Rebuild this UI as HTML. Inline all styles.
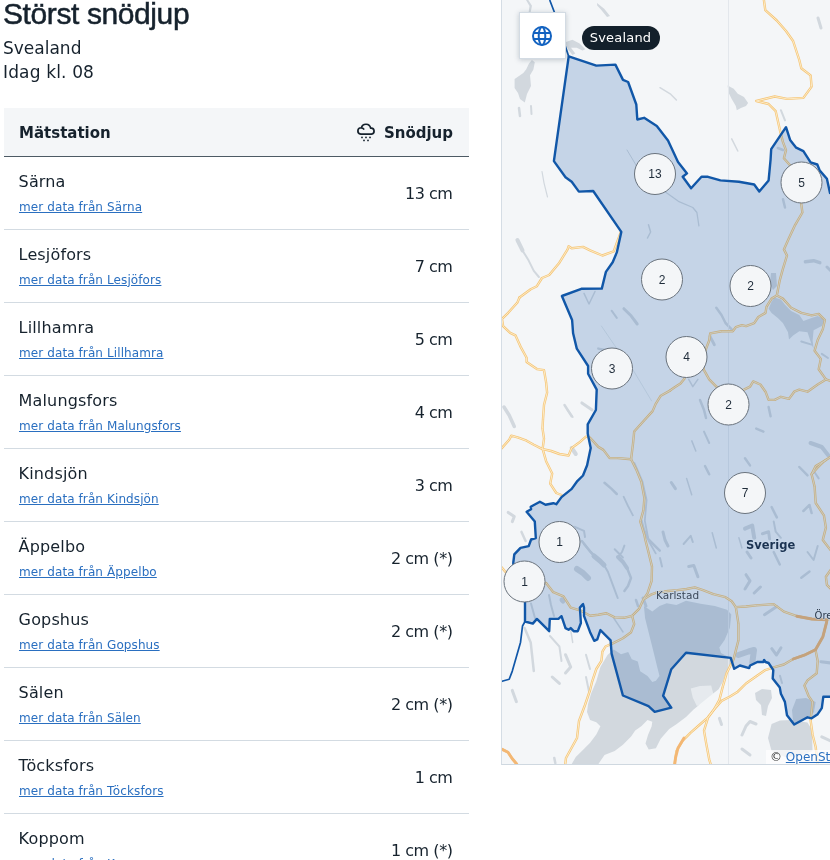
<!DOCTYPE html>
<html lang="sv">
<head>
<meta charset="utf-8">
<title>Störst snödjup</title>
<style>
html,body{margin:0;padding:0;background:#fff;}
body{width:830px;height:860px;overflow:hidden;position:relative;font-family:"DejaVu Sans","Liberation Sans",sans-serif;color:#16222d;}
h1,.sub,table,.attr,.pill,.mapsvg{will-change:transform;}
h1{position:absolute;left:3px;top:-6px;margin:0;font-family:"Liberation Sans","DejaVu Sans",sans-serif;font-weight:400;font-size:30px;line-height:40px;letter-spacing:-0.4px;color:#16222d;-webkit-text-stroke:0.5px #16222d;white-space:nowrap;}
.sub{position:absolute;left:3px;font-size:17px;line-height:24px;white-space:nowrap;}
table{position:absolute;left:4px;top:108px;width:465px;border-collapse:collapse;table-layout:fixed;}
th{height:48px;background:#f4f6f8;border-bottom:1px solid #4d5a64;font-size:15px;font-weight:bold;padding:2px 16px 0 15px;text-align:left;box-sizing:border-box;}
th.r,td.r{text-align:right;}
th.r{padding-right:16px;}
td{height:73px;box-sizing:border-box;border-bottom:1px solid #d3dbe2;padding:0 16px 0 14.6px;vertical-align:top;}
td .n{display:block;font-size:16px;line-height:22px;margin-top:14px;letter-spacing:0.15px;}
td a{display:inline-block;font-size:12px;line-height:16px;color:#2a6fc0;text-decoration:underline;margin-top:6px;margin-left:0.4px;letter-spacing:0.1px;}
td.r{font-size:16px;vertical-align:middle;padding-top:2px;padding-right:16.5px;letter-spacing:-0.45px;}
.ico{position:absolute;left:354px;top:120px;width:24px;height:24px;}
.map{position:absolute;left:501px;top:0;width:329px;height:765px;overflow:hidden;box-sizing:border-box;}
.mapsvg{position:absolute;left:0;top:0;display:block;}
.map:after{content:"";position:absolute;left:0;top:0;right:0;bottom:0;border-left:1px solid #d5dde5;border-bottom:1px solid #cfd8e0;pointer-events:none;}
.gbtn{position:absolute;left:18px;top:12px;width:47px;height:47px;background:#fff;border:1px solid #d3dbe3;box-sizing:border-box;box-shadow:0 1px 5px rgba(40,60,80,0.25);}
.gbtn svg{position:absolute;left:10px;top:11px;}
.pill{position:absolute;left:81px;top:26px;height:24px;width:78px;text-indent:-1px;border-radius:12px;background:#13202b;color:#fff;font-size:13px;line-height:24px;text-align:center;letter-spacing:0.2px;}
.attr{position:absolute;left:265px;top:750px;height:15px;width:70px;background:rgba(255,255,255,0.7);font-size:12px;line-height:15px;padding-left:4px;color:#333;white-space:nowrap;}
.attr a{color:#2a6fc0;text-decoration:underline;}
</style>
</head>
<body>
<h1>Störst snödjup</h1>
<div class="sub" style="top:36px">Svealand</div>
<div class="sub" style="top:60px;letter-spacing:0.15px">Idag kl. 08</div>
<table>
<thead><tr><th>Mätstation</th><th class="r">Snödjup</th></tr></thead>
<tbody>
<tr><td><span class="n">Särna</span><a>mer data från Särna</a></td><td class="r">13 cm</td></tr>
<tr><td><span class="n">Lesjöfors</span><a>mer data från Lesjöfors</a></td><td class="r">7 cm</td></tr>
<tr><td><span class="n">Lillhamra</span><a>mer data från Lillhamra</a></td><td class="r">5 cm</td></tr>
<tr><td><span class="n">Malungsfors</span><a>mer data från Malungsfors</a></td><td class="r">4 cm</td></tr>
<tr><td><span class="n">Kindsjön</span><a>mer data från Kindsjön</a></td><td class="r">3 cm</td></tr>
<tr><td><span class="n">Äppelbo</span><a>mer data från Äppelbo</a></td><td class="r">2 cm (*)</td></tr>
<tr><td><span class="n">Gopshus</span><a>mer data från Gopshus</a></td><td class="r">2 cm (*)</td></tr>
<tr><td><span class="n">Sälen</span><a>mer data från Sälen</a></td><td class="r">2 cm (*)</td></tr>
<tr><td><span class="n">Töcksfors</span><a>mer data från Töcksfors</a></td><td class="r">1 cm</td></tr>
<tr><td><span class="n">Koppom</span><a>mer data från Koppom</a></td><td class="r">1 cm (*)</td></tr>
</tbody>
</table>
<svg class="ico" viewBox="0 0 24 24" fill="none" stroke="#16222d" stroke-width="1.7" stroke-linecap="round" stroke-linejoin="round">
<path d="M6.75 14.15 H17.5 A3 3 0 0 0 16.6 8.2 A4.7 4.7 0 0 0 7.4 7.8 A3.15 3.15 0 0 0 6.75 14.15 Z M7.4 7.8 Q8.9 8 9.7 9"/>
<g fill="#16222d" stroke="none"><circle cx="8" cy="17.4" r="0.9"/><circle cx="12" cy="17.4" r="0.9"/><circle cx="16" cy="17.4" r="0.9"/><circle cx="10" cy="20.4" r="0.9"/><circle cx="14" cy="20.4" r="0.9"/></g>
</svg>
<div class="map">
<svg class="mapsvg" width="329" height="765" viewBox="501 0 329 765">
<rect x="501" y="0" width="329" height="765" fill="#f4f6f8"/>
<g fill="#d2d8de">
<path d="M643.9,606.1 L652.3,611.4 L659.5,606.1 L666.7,603.3 L676.4,604.9 L686,600.8 L700.5,603.7 L714.9,606.1 L727,609.8 L731.3,614.6 L729.9,627.8 L724.6,639.9 L719.3,647.6 L721,653.1 L728.2,656.7 L731.8,660.4 L729.9,666.4 L725.8,673.6 L722.7,682 L718.6,689.3 L712.5,694.1 L700.5,703.7 L693.3,709.8 L686,717 L676.4,724.2 L669.2,729 L660.7,738.7 L655.9,748.3 L648.7,749.5 L645.5,743.5 L648,735.1 L651.6,726.6 L652.3,721.8 L647.5,720.1 L641.3,726.3 L635.2,730.4 L631.1,736.5 L622.9,744.7 L614.7,750.9 L604.5,754.9 L600.4,761.1 L596.3,767 L570,767 L575.8,757 L581.9,750.9 L590.1,742.7 L596.3,734.5 L600.4,726.3 L596.3,722.2 L590.1,720.1 L587,711.9 L588.1,703.7 L591.1,693.5 L596.3,681.2 L600.4,666.9 L607.5,655 L613.7,649.5 L621,654.3 L628.2,651.9 L631.8,659.2 L637.8,661.6 L640.2,671.2 L647.5,676 L652.3,682 L655.9,680.8 L659.5,676 L657.1,666.4 L652.3,647.1 L648.7,632.7 L645.1,618.2 Z"/>
<path d="M771.6,301.6 L774.7,297.5 L780.9,299.6 L785,304.7 L791.1,310.9 L799.3,315 L803.4,321.1 L811.6,318 L817.7,316 L823.9,319 L823.9,322 L821.8,326.1 L813.6,330.2 L812.6,340.5 L813.6,348.7 L811.6,344.6 L807.5,332.3 L799.3,331.3 L793.1,335.4 L789,339.5 L788,332.3 L782.9,323 L777.8,318 L771.6,312.9 L768.6,308.8 Z"/>
<path d="M771,273 L776,273 L777,286 L773,290 L770,284 Z"/>
<path d="M565.9,41.9 L572.4,39.8 L579.6,43.4 L585.4,49.2 L582.5,50.6 L576.7,47.7 L571,47.7 L575.3,53.5 L572.4,54.9 L568.1,49.2 L565.9,44.8 Z"/>
<path d="M531.9,60 L534.8,62.2 L533.4,69.4 L530,75.2 L531,86 L527,94 L524.8,102.4 L520,99 L518,93 L514.6,88.1 L514.6,79 L519,76 L523.3,73 L526.1,69.4 L529,63.6 Z"/>
<path d="M528.3,0 L532,5.8 L530.5,13 L528.5,13 L529.5,6 L526,0 Z"/>
<path d="M727.6,85.6 L733.7,88.7 L737.8,93.8 L744,96.9 L748.1,103 L746,106.1 L740.9,108.1 L736.8,110.2 L735.8,106.1 L731.7,98.9 L728.6,92.8 Z"/>
<path d="M597,2.9 L604.2,8.7 L610,15.9 L607,17 L601.3,10.1 L597.2,5.5 Z"/>
<path d="M755,693 L762,689 L771,690 L772,698 L768,706 L766,716 L762,715 L761,705 L756,700 Z"/>
<path d="M771.6,724 L780,720.5 L791,720 L807.5,722.4 L812,730 L812.5,751 L800,756 L785,757 L771.6,751 L768,738 Z"/>
<path d="M796.2,699 L806,698 L815.7,702 L814,712 L809,718 L800,722 L793,721 L792,710 Z"/>
</g>
<g fill="none" stroke="#d2d8de" stroke-linecap="round" stroke-linejoin="round">
<polyline points="584,544 589,550 594,556" stroke-width="2"/>
<polyline points="594,556 600,561 604,565" stroke-width="5"/>
<polyline points="604,565 608,572 612.6,584.4 617.7,598" stroke-width="2"/>
<polyline points="624.4,545.6 622,552 618,557" stroke-width="2"/>
<polyline points="618,557 623,562 627,568" stroke-width="4"/>
<polyline points="627,568 631,578 628,586 624.4,591" stroke-width="2.5"/>
<polyline points="577,569 583,573 588,578" stroke-width="6"/>
<polyline points="641.3,520.4 644,530 648,538.9 655,546 659.8,550.7" stroke-width="2.5"/>
<polyline points="663,532 665,540 668,546" stroke-width="3"/>
<polyline points="623.6,496.7 628,506 632.9,515.3" stroke-width="1.8"/>
<polyline points="549,595 551,605 554,616" stroke-width="2"/>
<polyline points="562,600 563,601" stroke-width="5"/>
<polyline points="531,603.5 535,618" stroke-width="2"/>
<polyline points="613.7,618 623,632" stroke-width="1.5"/>
<polyline points="643,598 646,606" stroke-width="3"/>
<polyline points="636,600 638,606" stroke-width="2.5"/>
<polyline points="524.6,628 530.7,642.4 533.8,671" stroke-width="2.5"/>
<polyline points="550,636 559.4,646.5 561.5,661" stroke-width="2"/>
<polyline points="565.5,654.7 570.7,667 565.5,673" stroke-width="3"/>
<polyline points="552.2,677 559.4,683.4" stroke-width="3"/>
<polyline points="570.7,630 572.7,642.4" stroke-width="1.5"/>
<polyline points="586,654.7 590,669" stroke-width="2"/>
<polyline points="586,677 589,691.5" stroke-width="2"/>
<polyline points="512.3,690.4 516.4,701.7" stroke-width="3"/>
<polyline points="554.3,758 555.3,763" stroke-width="2.5"/>
<polyline points="542,171.5 544,182.8 547.5,197" stroke-width="1.2"/>
<polyline points="517.4,240 522.5,250.4" stroke-width="4"/>
<polyline points="522.5,250.4 528.7,260.6 533.8,270.9 538.9,277" stroke-width="2"/>
<polyline points="648.5,224.8 650.6,232 647.5,238" stroke-width="1.5"/>
<polyline points="627,150 633,160 640,172" stroke-width="1"/>
<polyline points="584,293.4 589,304 595,291.5" stroke-width="1.5"/>
<polyline points="611.6,310.7 616.8,317.9" stroke-width="2"/>
<polyline points="623.9,308.7 631.1,315.8 637.2,324" stroke-width="3"/>
<polyline points="598.3,348.6 608.6,350.7" stroke-width="2.5"/>
<polyline points="581.9,402.9 592.2,410" stroke-width="3"/>
<polyline points="564.5,405 571.7,416.2" stroke-width="2.5"/>
<polyline points="504,407 509.2,415.2 514.3,426.5" stroke-width="3.5"/>
<polyline points="601.4,326 614.7,345.5 633.1,370 651.6,400.9" stroke-width="0.6"/>
<polyline points="567.6,410 572.7,417" stroke-width="2"/>
<polyline points="571.7,448 575.8,454" stroke-width="4"/>
<polyline points="604.5,482.7 611.6,488.9 616.8,494" stroke-width="2.5"/>
<polyline points="634.5,463 642.5,481.7 646.6,500 644.8,520.6 648.7,541 655.7,553.4" stroke-width="1.8"/>
<polyline points="508.2,512.4 514.3,516.5 512.3,521.6" stroke-width="3"/>
<polyline points="521.5,531.9 525.6,541" stroke-width="2.5"/>
<polyline points="574.8,526.8 584,530.9 585,537" stroke-width="2"/>
<polyline points="581.9,541 590,551.3 596.3,557.5" stroke-width="2.5"/>
<polyline points="614.7,549.3 622.9,557.5" stroke-width="2"/>
<polyline points="660,87.7 670.2,93.8 676.4,100" stroke-width="1.5"/>
<polyline points="731.7,138.9 737.8,151" stroke-width="1.5"/>
<polyline points="780.9,110.2 785,120.4" stroke-width="2"/>
<polyline points="777.8,148 783,150" stroke-width="2.5"/>
<polyline points="783,199.3 785,207.5" stroke-width="2.5"/>
<polyline points="664,191 678.4,201.3 692.8,207.5 696.9,212.5 698.9,225.8" stroke-width="1.3"/>
<polyline points="805.4,261.7 813.6,260.7 819.8,262.7" stroke-width="3.5"/>
<polyline points="716.3,307.8 721.5,315 725.5,323 731.7,329.3" stroke-width="2.5"/>
<polyline points="827,267 831,271" stroke-width="3"/>
<polyline points="710,336.4 714.3,344.6" stroke-width="3"/>
<polyline points="688.7,379.4 692.8,386.6 697.9,379.4" stroke-width="1.5"/>
<polyline points="700,400 704,410 706,418" stroke-width="2.5"/>
<polyline points="704,431.6 709.2,443" stroke-width="2"/>
<polyline points="691.8,440.9 695.8,451" stroke-width="1.5"/>
<polyline points="768.6,407 770.6,416.3" stroke-width="2.5"/>
<polyline points="756.3,428.6 763.4,431.6" stroke-width="2.5"/>
<polyline points="745,458.3 750,465.4" stroke-width="2.5"/>
<polyline points="810.6,443 821.8,447 828,455" stroke-width="4"/>
<polyline points="821.8,353.8 828,358" stroke-width="2"/>
<polyline points="801.3,341.5 811.6,344.6" stroke-width="2"/>
<polyline points="705,466 709.2,474.3" stroke-width="2.5"/>
<polyline points="671.3,482.5 675.4,488.7" stroke-width="3"/>
<polyline points="686.6,478.4 691.7,494.8" stroke-width="1.5"/>
<polyline points="799.3,467 807.5,475.4" stroke-width="2.5"/>
<polyline points="814.6,472.3 818.7,478.4" stroke-width="2"/>
<polyline points="771.6,507 776.8,517.4" stroke-width="2.5"/>
<polyline points="803.4,511 809.5,505 811.6,513" stroke-width="2.5"/>
<polyline points="745,528.6 752.2,525.5 754.2,537.8" stroke-width="4"/>
<polyline points="762.4,533.7 768.6,531.7 769.6,538.9" stroke-width="3"/>
<polyline points="773.7,521.4 775.7,531.7 780.9,537.8" stroke-width="2"/>
<polyline points="738.9,537.8 741.9,548" stroke-width="1.5"/>
<polyline points="747,552 751,558" stroke-width="3"/>
<polyline points="773.7,552 779.8,564.5" stroke-width="2.5"/>
<polyline points="807.5,552 813.6,560 817.7,546" stroke-width="2"/>
<polyline points="801.3,577.8 809.5,571.6" stroke-width="2.5"/>
<polyline points="683.6,544 690.7,535.8 692.8,542" stroke-width="2"/>
<polyline points="712.2,532.7 716.3,548" stroke-width="1.5"/>
<polyline points="688.7,566.5 693.8,565.5 697.9,576.8" stroke-width="3"/>
<polyline points="746,574.7 750,580.9 745,589" stroke-width="3"/>
<polyline points="754.2,593 760.4,587" stroke-width="3"/>
<polyline points="764.5,614.7 776.8,606.5" stroke-width="3"/>
<polyline points="660,558 662,566.5" stroke-width="2"/>
<polyline points="771.8,648.7 776.5,655 781,647.8" stroke-width="3"/>
<polyline points="738.4,655 748.6,651.5 754,650 752.3,662.7" stroke-width="6"/>
<polyline points="780,675.7 782,683" stroke-width="2"/>
<polyline points="821,661.7 831,663" stroke-width="3"/>
<polyline points="742,735 746,726 750,721.5 756,724" stroke-width="3"/>
<polyline points="742,749 750,755" stroke-width="3"/>
<polyline points="719.4,718.3 721.5,724.5" stroke-width="3"/>
<polyline points="821.8,736.8 831,741" stroke-width="3"/>
<polyline points="818,18 821,28" stroke-width="3"/>
<polyline points="519,108 520,116" stroke-width="2.5"/>
<polyline points="531,106 531.5,114" stroke-width="2"/>
</g>
<path d="M690.7,688.6 L700,686 L711.2,685.5 L713.3,693.7 L707.1,701.9 L696.9,706 L692.8,697.8 Z" fill="#f4f6f8" fill-opacity="0.6"/>
<line x1="728.5" y1="0" x2="728.5" y2="765" stroke="#e3e7ec" stroke-width="1"/>
<g fill="none" stroke-linejoin="round" stroke-linecap="round">
<g stroke="#f5c679" stroke-width="2.4">
<polyline points="763.6,-2 765.3,10.2 776.8,20.5 786,31 793.1,41 799.3,60 801.3,68.2 810.6,75.4 811.6,86.6 803.4,97.9 787,98.9 774.7,96.5 756.3,101 768.6,104 775.7,111.2 779.8,129.6 782.9,141.9 786,150.1 783.9,158.3 791.1,166.5 799,178 801.3,204.3 802.4,212.5 795.2,224.8 789,238.1 783.9,249.4 787,255.5 782.9,268.9 779.8,280.1 776.8,295.5"/>
<polyline points="776.8,295.5 782.9,298.6 791.1,307.8 801.3,312.9 811.6,315.4 818.7,313.9 824.9,320.1 822.8,329.3 817.7,340 814.6,350.7 820.8,358.9 818.7,369.2 825.9,379.4"/>
<polyline points="776.8,295.5 771.6,298.6 766.5,306.8 765.5,312.9 758.3,317 754.2,323.1 746,326.2 741.9,325.2 735.8,327.2 732.7,331.3 721.5,331.3 710.2,333.4 709.2,340.5 706.1,348.7 702,360 704,370.2 709.2,379.4 716.3,386.6 728,392 744,389.6 750.1,386.6 753.2,381.4 760.4,384.5 765.5,391.7 768.6,399.9 774.7,399.9 780.9,396.8 789,398.9 794.2,391.7 799.3,389.6 807.5,391.7 817.7,384.5 825.9,379.4 832,381.4"/>
<polyline points="519.5,297.5 530.7,289.3 536.9,286.2 542,278 549.2,275 559.4,262.7 567.6,249.3 568.6,246.3 571.7,248.3 583,246.9 590.1,250.4 602.4,255.5 613.7,251.4 617.8,240.1 620.9,232"/>
<polyline points="519.5,297.5 517.4,302.5 508.2,312.8 502,318.9 503.1,326.1 510.2,332.8 515.4,335.3 520.5,346.6 526.6,357.8 526.6,361.9 536.9,369.1 544,370.1 546.1,382.4 547.1,392.7 544,405 543,419.3 542.5,428.4 544,438.7 542.6,448.9 546.1,461.2 552.2,473.5 550.2,483.7 556.3,493 561.5,495"/>
<polyline points="500,450 502,447.9 509.2,439.7 511.3,435.6 518.4,437.7 526.6,440.7 533.8,444.8 542,448.9 551.2,451 559.4,454 568.6,455.5 571.7,447.9 578.9,442.8 586,436.6 590.1,437.7 598.3,446.9 603.4,449.9 609.6,458.1 617.8,458.1 631.1,459.2"/>
<polyline points="670,390.6 660.8,395.7 655.7,403.9 652.6,411.1 643.4,421.3 634.2,431.5 633.1,442.8 631.1,459.2 636.2,469.4 641.3,481.7 644.4,498.1 643.4,510.4 640.3,521.6 644.4,535 645.4,540 648.5,552.3 652,566.6 651.6,581 647.5,593.3 643.4,599.4"/>
<polyline points="684.6,378.4 680.5,383.5 674.3,387.6 670,390.6"/>
<polyline points="498,563 502,567.7 506.1,572.8 520,580 546.1,583 553.3,592.2 563.5,596.3 570.7,607.6 580.9,610.7 590.1,615.8 598.3,614.8 606.5,613.3 614.7,617.4 623.9,617.8 632.1,615.8 639.3,608.6 643.4,599.4 651.6,594.3 655.7,592.8 668,591 677.4,590.1 686.6,589 694.8,587.4 703,590.1 713.3,594.2 725.5,597.2 731.7,601.3 735.8,607.1 746,606.5 756.3,605.4 773.7,604.1 783.9,611.6 796.9,616.2 811.8,619 826.7,619.9 832,618"/>
<polyline points="632.1,615.8 634.2,624 631.1,632.2 622.9,638.3 612.7,643.4 605.5,646.5 602.4,651.6 601.4,660.9 596.3,669 592.2,681.3 590.1,690 585,705 579,721 577,738 566,758 565,766"/>
<polyline points="735.8,607.1 738.4,623.6 738.4,640.4 736.8,646.6 733.7,658.9 730.7,665.1 726.6,673.3 722.5,687.6 719.4,699.9 714.3,709.1 708.1,717.3 704,730.6 706.1,742.9 709.2,759.3 711.2,766"/>
<polyline points="826.7,621.8 822.9,636.7 815.5,649.7 804.3,655.2 793.2,659 783.9,664.5 773.7,667.3 765.3,670.1 756.3,676.3 746,683.5 737.8,691.7 729.6,696.8 721.5,700.9 714.3,709.1 708.1,717.3 699.9,724.5 690.7,732.7 682.5,740.9 676.4,751.1 674.3,766"/>
<polyline points="815.5,649.7 817.7,661 816.7,673.3 807.5,680.4 804.4,685.5 808.5,695.8 812.6,701.9 810.6,720.4 812.6,734.7 815.7,747 817.7,766"/>
<polyline points="825.9,460 815.7,466.1 811.6,474.3 814.6,486.6 815.7,503 823.9,515.3 825.9,527.6 822.8,539.9 832,552"/>
<polyline points="832,568 825.9,576.8 826.9,584.9 832,590"/>
<polyline points="832,456 823.9,461.3 817.7,467.5 811.6,474.3"/>
<polyline points="499,748 502.2,749.4 508,752.3 512.3,758.8 516.7,764 518,768"/>
</g>
<g stroke="#fdebc6" stroke-width="1">
<polyline points="763.6,-2 765.3,10.2 776.8,20.5 786,31 793.1,41 799.3,60 801.3,68.2 810.6,75.4 811.6,86.6 803.4,97.9 787,98.9 774.7,96.5 756.3,101 768.6,104 775.7,111.2 779.8,129.6 782.9,141.9 786,150.1 783.9,158.3 791.1,166.5 799,178 801.3,204.3 802.4,212.5 795.2,224.8 789,238.1 783.9,249.4 787,255.5 782.9,268.9 779.8,280.1 776.8,295.5"/>
<polyline points="776.8,295.5 782.9,298.6 791.1,307.8 801.3,312.9 811.6,315.4 818.7,313.9 824.9,320.1 822.8,329.3 817.7,340 814.6,350.7 820.8,358.9 818.7,369.2 825.9,379.4"/>
<polyline points="776.8,295.5 771.6,298.6 766.5,306.8 765.5,312.9 758.3,317 754.2,323.1 746,326.2 741.9,325.2 735.8,327.2 732.7,331.3 721.5,331.3 710.2,333.4 709.2,340.5 706.1,348.7 702,360 704,370.2 709.2,379.4 716.3,386.6 728,392 744,389.6 750.1,386.6 753.2,381.4 760.4,384.5 765.5,391.7 768.6,399.9 774.7,399.9 780.9,396.8 789,398.9 794.2,391.7 799.3,389.6 807.5,391.7 817.7,384.5 825.9,379.4 832,381.4"/>
<polyline points="519.5,297.5 530.7,289.3 536.9,286.2 542,278 549.2,275 559.4,262.7 567.6,249.3 568.6,246.3 571.7,248.3 583,246.9 590.1,250.4 602.4,255.5 613.7,251.4 617.8,240.1 620.9,232"/>
<polyline points="519.5,297.5 517.4,302.5 508.2,312.8 502,318.9 503.1,326.1 510.2,332.8 515.4,335.3 520.5,346.6 526.6,357.8 526.6,361.9 536.9,369.1 544,370.1 546.1,382.4 547.1,392.7 544,405 543,419.3 542.5,428.4 544,438.7 542.6,448.9 546.1,461.2 552.2,473.5 550.2,483.7 556.3,493 561.5,495"/>
<polyline points="500,450 502,447.9 509.2,439.7 511.3,435.6 518.4,437.7 526.6,440.7 533.8,444.8 542,448.9 551.2,451 559.4,454 568.6,455.5 571.7,447.9 578.9,442.8 586,436.6 590.1,437.7 598.3,446.9 603.4,449.9 609.6,458.1 617.8,458.1 631.1,459.2"/>
<polyline points="670,390.6 660.8,395.7 655.7,403.9 652.6,411.1 643.4,421.3 634.2,431.5 633.1,442.8 631.1,459.2 636.2,469.4 641.3,481.7 644.4,498.1 643.4,510.4 640.3,521.6 644.4,535 645.4,540 648.5,552.3 652,566.6 651.6,581 647.5,593.3 643.4,599.4"/>
<polyline points="684.6,378.4 680.5,383.5 674.3,387.6 670,390.6"/>
<polyline points="498,563 502,567.7 506.1,572.8 520,580 546.1,583 553.3,592.2 563.5,596.3 570.7,607.6 580.9,610.7 590.1,615.8 598.3,614.8 606.5,613.3 614.7,617.4 623.9,617.8 632.1,615.8 639.3,608.6 643.4,599.4 651.6,594.3 655.7,592.8 668,591 677.4,590.1 686.6,589 694.8,587.4 703,590.1 713.3,594.2 725.5,597.2 731.7,601.3 735.8,607.1 746,606.5 756.3,605.4 773.7,604.1 783.9,611.6 796.9,616.2 811.8,619 826.7,619.9 832,618"/>
<polyline points="632.1,615.8 634.2,624 631.1,632.2 622.9,638.3 612.7,643.4 605.5,646.5 602.4,651.6 601.4,660.9 596.3,669 592.2,681.3 590.1,690 585,705 579,721 577,738 566,758 565,766"/>
<polyline points="735.8,607.1 738.4,623.6 738.4,640.4 736.8,646.6 733.7,658.9 730.7,665.1 726.6,673.3 722.5,687.6 719.4,699.9 714.3,709.1 708.1,717.3 704,730.6 706.1,742.9 709.2,759.3 711.2,766"/>
<polyline points="826.7,621.8 822.9,636.7 815.5,649.7 804.3,655.2 793.2,659 783.9,664.5 773.7,667.3 765.3,670.1 756.3,676.3 746,683.5 737.8,691.7 729.6,696.8 721.5,700.9 714.3,709.1 708.1,717.3 699.9,724.5 690.7,732.7 682.5,740.9 676.4,751.1 674.3,766"/>
<polyline points="815.5,649.7 817.7,661 816.7,673.3 807.5,680.4 804.4,685.5 808.5,695.8 812.6,701.9 810.6,720.4 812.6,734.7 815.7,747 817.7,766"/>
<polyline points="825.9,460 815.7,466.1 811.6,474.3 814.6,486.6 815.7,503 823.9,515.3 825.9,527.6 822.8,539.9 832,552"/>
<polyline points="832,568 825.9,576.8 826.9,584.9 832,590"/>
<polyline points="832,456 823.9,461.3 817.7,467.5 811.6,474.3"/>
<polyline points="499,748 502.2,749.4 508,752.3 512.3,758.8 516.7,764 518,768"/>
</g>
<g stroke="#f3b774" stroke-width="2.9">
<polyline points="796.9,616.2 811.8,619 826.7,619.9 826.7,621.8 822.9,636.7 815.5,649.7 804.3,655.2 793.2,659"/>
<polyline points="499,748 502.2,749.4 508,752.3 512.3,758.8 516.7,764 518,768"/>
<polyline points="684,738 678,748 675.5,758 674.5,766"/>
</g>
</g>
<polygon points="568.7,56.4 596.3,65.6 615.4,64.6 623,79.9 628.1,82 636.3,104.5 637.3,119.5 644.1,117.8 656.8,126 668,140.4 678,162 687,173.4 682.7,176.8 691.1,188.3 701.5,176.8 708,176.8 720.4,180.4 738.9,181.7 754.2,184.5 759.3,191.5 768.6,180.4 770.6,159.3 771.2,149.1 786,127.2 790.1,139.9 796.2,147.7 803.4,151.2 810.6,162.4 817.3,164.5 819.8,170.6 826.9,178.8 830,193 845,193 845,696.8 823.3,696.8 821.8,708.1 817.7,714.2 811.6,718.3 807.5,717.3 794.2,724.5 787,715.2 784.9,701.9 780.9,693.7 779.8,687.6 772.7,678.4 773.3,670.2 768.6,663 765.5,662 764.1,659.9 763.4,662 757.3,662 750.1,665.5 749.1,668.1 739.9,665.5 734.2,668.8 730.7,657.9 686,652.8 671.3,669.2 663.1,695.8 671.3,707.7 654.7,711.9 648.5,706.2 622.9,695.5 611.6,653.6 610.6,640.3 600.4,630.1 597.3,639.3 594.2,640.8 590.1,632.2 584,615.8 584,607.6 583,604.1 579.9,607.6 580.9,623 577.8,631.2 573.7,631.2 570.7,628.1 568.6,629.7 565.5,628.1 561.5,616.2 558.4,618.9 549.8,618.9 549.2,631.2 536.9,618.9 532.8,623.6 525,621.5 525,601.5 524,590 513.3,575 513.3,562.5 514.3,554.3 520.5,547.8 528.7,546.1 531.1,539.5 535.8,538 534.8,521.6 526.6,511.8 531.1,509.3 530.7,506.7 539.9,501.8 545.5,504.8 553.3,503.2 556.3,504.2 561.5,497.1 571.7,488.9 576.8,481.7 583,475.5 587.1,465.3 590.7,447.9 587.7,433.6 587.7,424.3 595.9,410 596.7,389.6 588.1,373.8 588.1,366 576.8,348.6 573.1,333.3 572.1,320 561.9,296 581.3,288.8 601.8,288.6 605.9,271.9 612.7,262.2 616.8,252.4 621.3,231.9 593.2,191 578.9,191.6 571.7,181.7 565.5,177.2 553.9,161.1" fill="#0a4ea3" fill-opacity="0.2" stroke="#1157a8" stroke-width="2.4" stroke-linejoin="round"/>
<polyline points="549.7,0 554.3,12 568.7,56.4" fill="none" stroke="#1157a8" stroke-width="1.7" stroke-linejoin="round"/>
<polyline points="525,621.5 522.5,626 520.5,642.4 516.4,656.8 512.3,671.1 509.2,679.3 502,681.3 498,682" fill="none" stroke="#1157a8" stroke-width="1.7" stroke-linejoin="round"/>
<g font-family="'DejaVu Sans','Liberation Sans',sans-serif">
<text x="746" y="548.5" font-size="11.5" font-weight="bold" fill="#1b3352" stroke="#c9d8ea" stroke-width="1.5" paint-order="stroke">Sverige</text>
<text x="656" y="598.8" font-size="10.5" fill="#3a4758" stroke="#c9d8ea" stroke-width="1.2" paint-order="stroke">Karlstad</text>
<text x="814.6" y="618.6" font-size="10" fill="#2c3a4c" stroke="#c9d8ea" stroke-width="1.2" paint-order="stroke">Örebro</text>
</g>
<g font-family="'Liberation Sans','DejaVu Sans',sans-serif" font-size="12" text-anchor="middle" fill="#1f2c3a">
<circle cx="655" cy="174" r="20.5" fill="#f4f6f8" stroke="#6a737d" stroke-width="1"/>
<text x="655" y="178.3">13</text>
<circle cx="801.5" cy="182.5" r="20.5" fill="#f4f6f8" stroke="#6a737d" stroke-width="1"/>
<text x="801.5" y="186.8">5</text>
<circle cx="662" cy="279.5" r="20.5" fill="#f4f6f8" stroke="#6a737d" stroke-width="1"/>
<text x="662" y="283.8">2</text>
<circle cx="750.5" cy="286" r="20.5" fill="#f4f6f8" stroke="#6a737d" stroke-width="1"/>
<text x="750.5" y="290.3">2</text>
<circle cx="612" cy="368.5" r="20.5" fill="#f4f6f8" stroke="#6a737d" stroke-width="1"/>
<text x="612" y="372.8">3</text>
<circle cx="686.5" cy="357" r="20.5" fill="#f4f6f8" stroke="#6a737d" stroke-width="1"/>
<text x="686.5" y="361.3">4</text>
<circle cx="728.5" cy="404.5" r="20.5" fill="#f4f6f8" stroke="#6a737d" stroke-width="1"/>
<text x="728.5" y="408.8">2</text>
<circle cx="745" cy="493" r="20.5" fill="#f4f6f8" stroke="#6a737d" stroke-width="1"/>
<text x="745" y="497.3">7</text>
<circle cx="559.5" cy="542" r="20.5" fill="#f4f6f8" stroke="#6a737d" stroke-width="1"/>
<text x="559.5" y="546.3">1</text>
<circle cx="524.5" cy="581.5" r="20.5" fill="#f4f6f8" stroke="#6a737d" stroke-width="1"/>
<text x="524.5" y="585.8">1</text>
</g>
</svg>
<div class="gbtn"><svg width="24" height="24" viewBox="0 0 24 24" fill="none" stroke="#1262c0" stroke-width="2"><circle cx="12" cy="12" r="9"/><ellipse cx="12" cy="12" rx="3.3" ry="9"/><path d="M3.6 9H20.4M3.6 15H20.4"/></svg></div>
<div class="pill">Svealand</div>
<div class="attr">© <a>OpenStreetMap</a></div>
</div>
</body>
</html>
